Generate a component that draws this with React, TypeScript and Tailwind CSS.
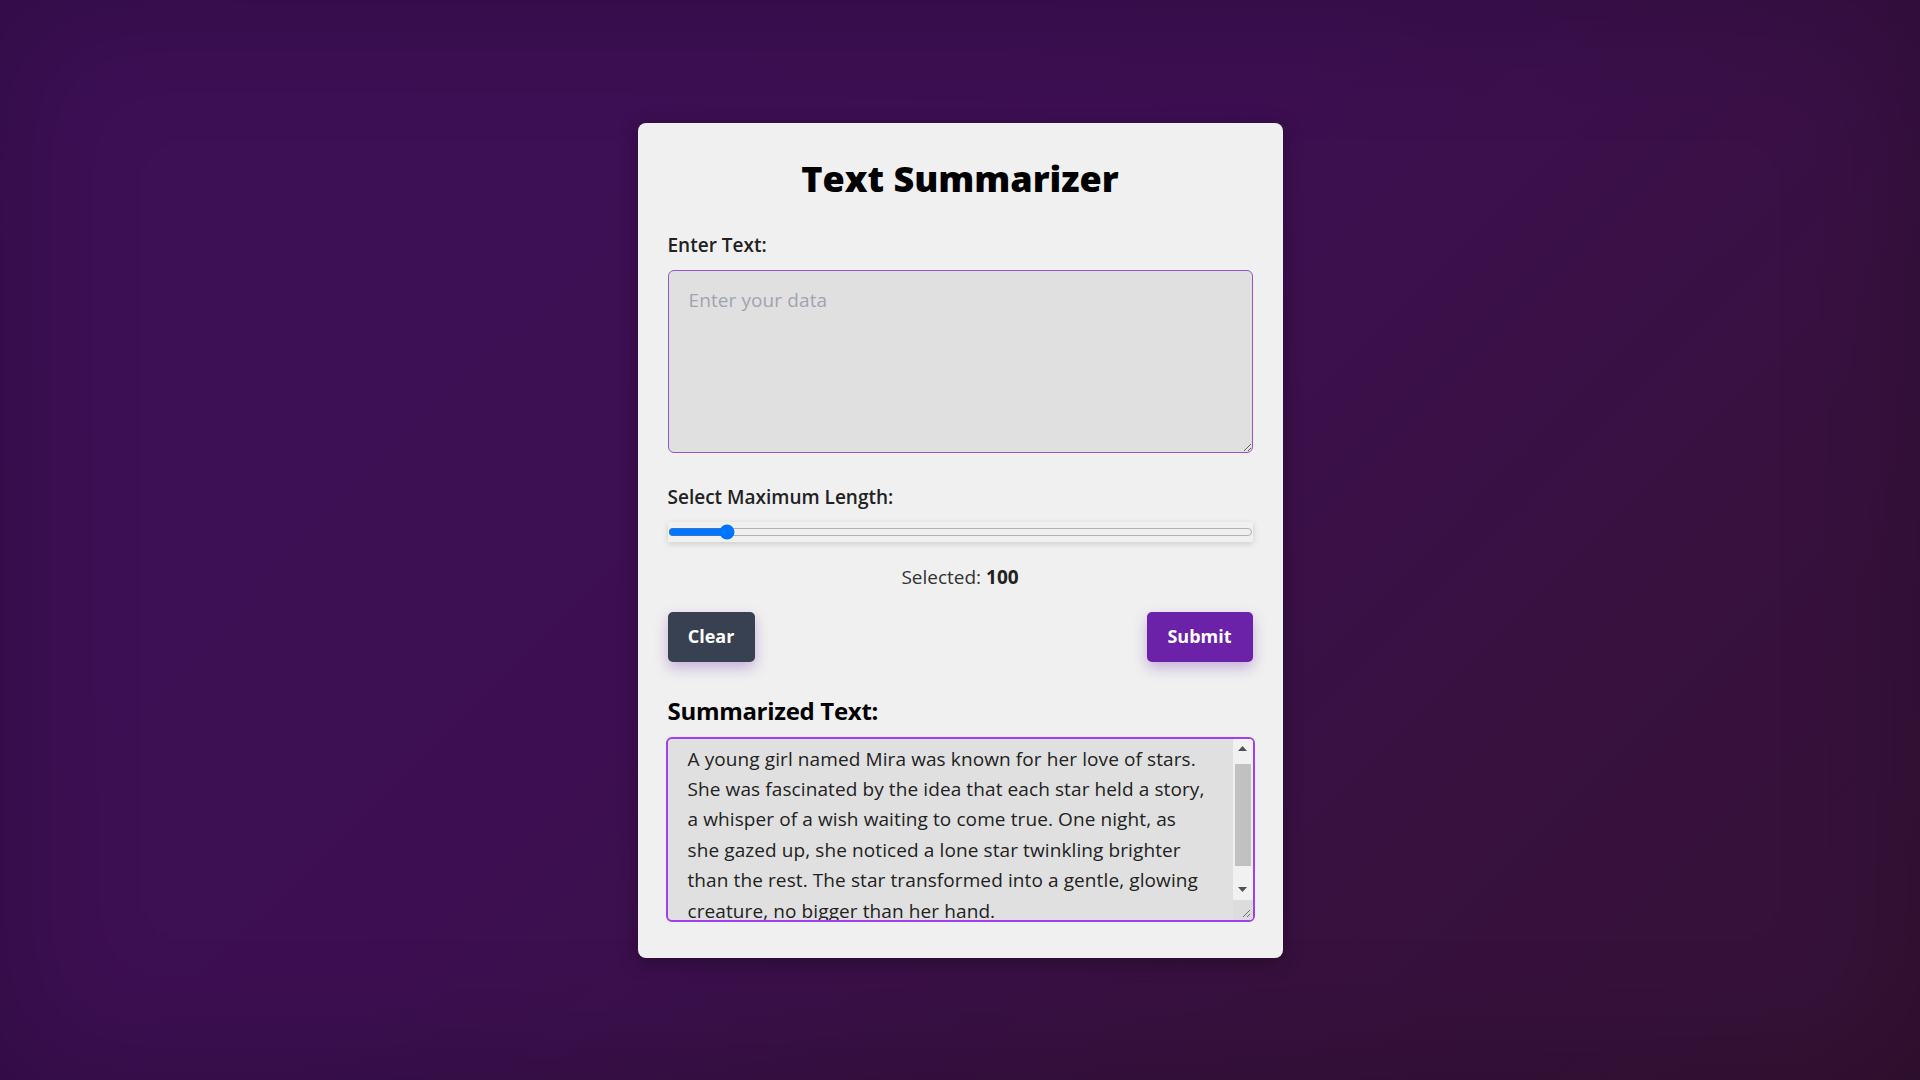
import React, { useState } from "react";

const SUMMARY =
  "A young girl named Mira was known for her love of stars. She was fascinated by the idea that each star held a story, a whisper of a wish waiting to come true. One night, as she gazed up, she noticed a lone star twinkling brighter than the rest. The star transformed into a gentle, glowing creature, no bigger than her hand.\nIt told her that it had heard her wishes every night, and that it had come down to thank her for believing in the magic of the sky.";

function Arrow({ up }: { up?: boolean }) {
  return (
    <div className="h-[20px] flex items-center justify-center">
      <svg width="9" height="5" viewBox="0 0 9 5">
        {up ? (
          <polygon points="0,5 9,5 4.5,0" fill="#505050" />
        ) : (
          <polygon points="0,0 9,0 4.5,5" fill="#505050" />
        )}
      </svg>
    </div>
  );
}

export default function App() {
  const [len, setLen] = useState(100);
  return (
    <div
      className="min-h-screen w-full flex items-center justify-center bg-[linear-gradient(135deg,#3d0f56_0%,#3d0f52_45%,#38113f_75%,#351235_100%)] shadow-[inset_0_0_140px_rgba(0,0,0,0.22)]"
      style={{ fontFamily: "'Open Sans', 'Noto Sans', sans-serif" }}
    >
      <div className="w-[645px] bg-[#f0f0f0] rounded-[8px] px-[30px] pt-[34px] pb-[36px] flex flex-col shadow-[0_4px_20px_rgba(0,0,0,0.3)]">
        <h1 className="text-center text-[36px] leading-[44px] font-extrabold text-black">
          Text Summarizer
        </h1>
        <label className="mt-[32px] text-[19px] leading-[24px] font-semibold text-[#222]">
          Enter Text:
        </label>
        <textarea
          placeholder="Enter your data"
          className="mt-[13px] h-[183px] w-full resize-y rounded-[6px] border border-[#9553cf] bg-[#e0e0e0] px-[20px] py-[14px] text-[19px] leading-[30px] tracking-[0.1px] text-[#222] placeholder:text-[#a0a4b0] outline-none"
        />
        <label className="mt-[32px] text-[19px] leading-[24px] font-semibold text-[#222]">
          Select Maximum Length:
        </label>
        <input
          type="range"
          min={10}
          max={1000}
          value={len}
          onChange={(e) => setLen(Number(e.target.value))}
          className="mt-[13px] h-[20px] w-full shadow-[0_2px_6px_rgba(0,0,0,0.15)]"
        />
        <div className="mt-[23px] text-center text-[19px] leading-[24px] text-[#333]">
          Selected: <span className="font-bold text-[#222]">{len}</span>
        </div>
        <div className="mt-[23px] flex justify-between">
          <button className="h-[50px] w-[87px] rounded-[5px] bg-[#374151] text-white text-[18px] font-bold shadow-[0_6px_14px_rgba(107,33,168,0.3)]">
            Clear
          </button>
          <button className="h-[50px] w-[106px] rounded-[5px] bg-[#6b21a8] text-white text-[18px] font-bold shadow-[0_6px_14px_rgba(107,33,168,0.3)]">
            Submit
          </button>
        </div>
        <h2 className="mt-[33px] text-[24px] leading-[32px] font-bold text-black tracking-[-0.3px]">
          Summarized Text:
        </h2>
        <div className="mt-[10px] -mx-[2px] h-[185px] flex rounded-[6px] border-2 border-[#a03ff0] bg-[#e0e0e0] overflow-hidden">
          <textarea
            readOnly
            value={SUMMARY}
            className="flex-1 h-full resize-none overflow-hidden bg-transparent pl-[20px] pr-[24px] pt-[5px] text-[19px] leading-[30.4px] tracking-[0.1px] text-[#222] outline-none"
          />
          <div className="w-[20px] flex flex-col bg-[#f1f1f1]">
            <Arrow up />
            <div className="flex-1 px-[2px]">
              <div className="mt-[5px] h-[102px] bg-[#c1c1c1]" />
            </div>
            <Arrow />
            <div className="h-[20px] bg-[#dcdcdc] flex items-end justify-end p-[2px]">
              <svg width="10" height="10" viewBox="0 0 10 10">
                <line x1="9" y1="2" x2="2" y2="9" stroke="#707070" strokeWidth="1" />
                <line x1="9" y1="6" x2="6" y2="9" stroke="#707070" strokeWidth="1" />
              </svg>
            </div>
          </div>
        </div>
      </div>
    </div>
  );
}
